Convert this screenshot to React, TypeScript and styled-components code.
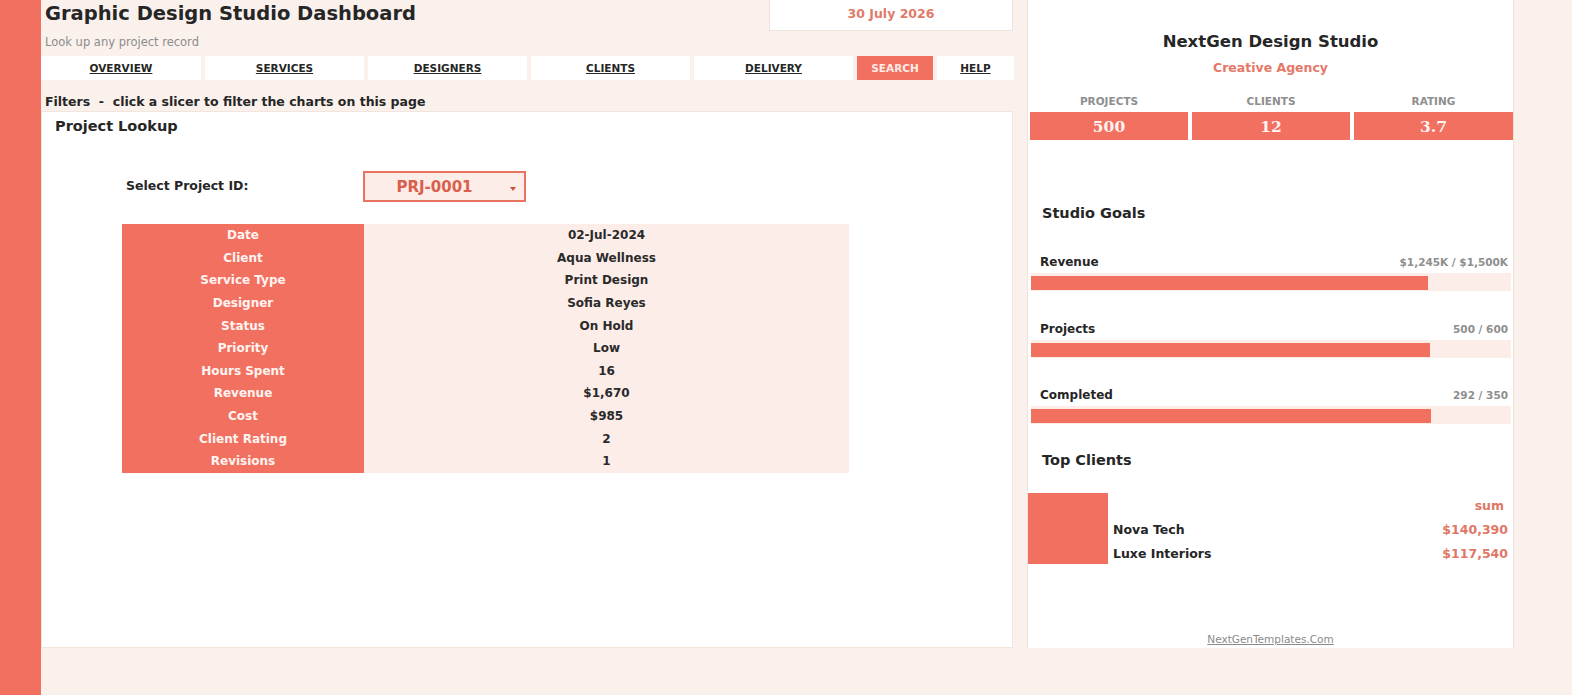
import React from 'react';
import styled, { createGlobalStyle } from 'styled-components';

const coral = '#f27060';
const soft = '#fcede8';
const ink = '#262626';

const GlobalStyle = createGlobalStyle`
  html, body {
    margin: 0;
    padding: 0;
    background: #faf1ed;
    font-family: "DejaVu Sans", Verdana, sans-serif;
    color: ${ink};
  }
  * { box-sizing: border-box; }
`;

const Page = styled.div`
  display: flex;
  height: 695px;
  width: 1572px;
  overflow: hidden;
`;

const Stripe = styled.div`
  width: 41px;
  flex: none;
  background: ${coral};
`;

const MainColumn = styled.div`
  width: 972px;
  flex: none;
  display: flex;
  flex-direction: column;
`;

const Header = styled.div`
  height: 56px;
  display: flex;
  justify-content: space-between;
  align-items: flex-start;
`;

const TitleBlock = styled.div`
  padding: 1px 0 0 4px;
`;

const Title = styled.h1`
  margin: 0;
  font-size: 19.5px;
  line-height: 26px;
  font-weight: bold;
  color: ${ink};
`;

const Subtitle = styled.div`
  margin-top: 8px;
  font-size: 11.5px;
  color: #8c8c8c;
`;

const DateBox = styled.div`
  width: 244px;
  height: 31px;
  background: #fff;
  border: 1px solid #f0e2dc;
  border-top: none;
  display: flex;
  align-items: center;
  justify-content: center;
  padding-bottom: 3px;
  font-size: 12.5px;
  font-weight: bold;
  color: #e07a69;
`;

const Nav = styled.nav`
  display: flex;
  gap: 4px;
  height: 24px;
`;

const NavButton = styled.div<{ $w: number; $active?: boolean }>`
  width: ${p => p.$w}px;
  flex: none;
  display: flex;
  align-items: center;
  justify-content: center;
  background: ${p => (p.$active ? coral : '#fff')};
  color: ${p => (p.$active ? '#fdebe6' : ink)};
  text-decoration: ${p => (p.$active ? 'none' : 'underline')};
  font-size: 10.5px;
  font-weight: bold;
`;

const FilterNote = styled.div`
  height: 31px;
  padding: 14px 0 0 4px;
  font-size: 12.5px;
  font-weight: bold;
  line-height: 16px;
`;

const Panel = styled.section`
  height: 537px;
  background: #fff;
  border: 1px solid #f3e4de;
  padding: 5px 0 0 13px;
`;

const PanelTitle = styled.h2`
  margin: 0;
  font-size: 14.5px;
  line-height: 18px;
  font-weight: bold;
`;

const Lookup = styled.div`
  margin: 36px 0 0 67px;
  width: 728px;
`;

const SelectRow = styled.div`
  display: flex;
  align-items: center;
`;

const SelectLabel = styled.div`
  width: 241px;
  padding: 0 0 2px 4px;
  font-size: 12.5px;
  font-weight: bold;
`;

const Dropdown = styled.div`
  position: relative;
  width: 163px;
  height: 31px;
  border: 2px solid #e8735f;
  background: ${soft};
  display: flex;
  align-items: center;
  justify-content: center;
  padding-right: 20px;
  font-size: 15px;
  font-weight: bold;
  color: #d9604c;
`;

const Caret = styled.span`
  position: absolute;
  right: 8px;
  top: 14px;
  width: 0;
  height: 0;
  border-left: 3.5px solid transparent;
  border-right: 3.5px solid transparent;
  border-top: 4px solid #c9503c;
`;

const Table = styled.div`
  margin-top: 22px;
  display: grid;
  grid-template-columns: 242px 485px;
`;

const LabelCell = styled.div`
  height: 22.6px;
  background: ${coral};
  color: #fff4f1;
  display: flex;
  align-items: center;
  justify-content: center;
  font-size: 12px;
  font-weight: bold;
`;

const ValueCell = styled.div`
  height: 22.6px;
  background: ${soft};
  display: flex;
  align-items: center;
  justify-content: center;
  font-size: 12px;
  font-weight: bold;
  color: #2a2a2a;
`;

const Side = styled.aside`
  margin-left: 14px;
  width: 487px;
  height: 648px;
  flex: none;
  background: #fff;
  border-left: 1px solid #f0e2dc;
  border-right: 1px solid #f0e2dc;
  padding: 31px 1px 0 1px;
  display: flex;
  flex-direction: column;
`;

const Studio = styled.div`
  text-align: center;
  font-size: 16.5px;
  font-weight: bold;
  line-height: 22px;
`;

const Agency = styled.div`
  margin-top: 7px;
  text-align: center;
  font-size: 12.5px;
  line-height: 15px;
  font-weight: bold;
  color: #e57867;
`;

const StatGrid = styled.div`
  margin-top: 20px;
  display: grid;
  grid-template-columns: 158px 158px 159px;
  column-gap: 4px;
  padding-left: 1px;
`;

const StatLabel = styled.div`
  text-align: center;
  font-size: 10.5px;
  line-height: 13px;
  font-weight: bold;
  color: #8e8e8e;
  height: 17px;
`;

const StatValue = styled.div`
  height: 28px;
  background: ${coral};
  color: #fff4f1;
  display: flex;
  align-items: center;
  justify-content: center;
  font-family: "DejaVu Serif", "Liberation Serif", serif;
  font-size: 15.5px;
  font-weight: bold;
`;

const SectionTitle = styled.h3<{ $top: number }>`
  margin: ${p => p.$top}px 0 0 13px;
  font-size: 14.5px;
  line-height: 18px;
  font-weight: bold;
`;

const Goal = styled.div<{ $top: number }>`
  margin-top: ${p => p.$top}px;
`;

const GoalHead = styled.div`
  display: flex;
  justify-content: space-between;
  align-items: center;
  padding: 0 4px 0 11px;
  height: 16px;
`;

const GoalName = styled.span`
  font-size: 12px;
  font-weight: bold;
`;

const GoalValue = styled.span`
  font-size: 10.5px;
  font-weight: bold;
  color: #8e8e8e;
`;

const Track = styled.div`
  margin: 3px 1px 0 2px;
  height: 18px;
  background: ${soft};
  padding-top: 3px;
`;

const Fill = styled.div`
  height: 14px;
  background: ${coral};
`;

const Clients = styled.div`
  margin-top: 24px;
  display: flex;
  margin-left: -1px;
`;

const Swatch = styled.div`
  width: 80px;
  height: 71px;
  background: ${coral};
  flex: none;
`;

const ClientList = styled.div`
  flex: 1;
  padding: 0 4px 0 5px;
`;

const ClientRow = styled.div`
  display: flex;
  justify-content: space-between;
  align-items: center;
  height: 24px;
  font-size: 12.5px;
  font-weight: bold;
`;

const Money = styled.span<{ $pad?: number }>`
  color: #e07766;
  padding-right: ${p => p.$pad ?? 0}px;
`;

const Footer = styled.a`
  margin-top: auto;
  margin-bottom: 3px;
  align-self: center;
  font-size: 10.5px;
  color: #8a8a8a;
  text-decoration: underline;
`;

const navItems = [
  { label: 'OVERVIEW', w: 160 },
  { label: 'SERVICES', w: 159 },
  { label: 'DESIGNERS', w: 159 },
  { label: 'CLIENTS', w: 159 },
  { label: 'DELIVERY', w: 159 },
  { label: 'SEARCH', w: 76, active: true },
  { label: 'HELP', w: 77 },
];

const record: [string, string][] = [
  ['Date', '02-Jul-2024'],
  ['Client', 'Aqua Wellness'],
  ['Service Type', 'Print Design'],
  ['Designer', 'Sofia Reyes'],
  ['Status', 'On Hold'],
  ['Priority', 'Low'],
  ['Hours Spent', '16'],
  ['Revenue', '$1,670'],
  ['Cost', '$985'],
  ['Client Rating', '2'],
  ['Revisions', '1'],
];

const stats = [
  { label: 'PROJECTS', value: '500' },
  { label: 'CLIENTS', value: '12' },
  { label: 'RATING', value: '3.7' },
];

const goals = [
  { name: 'Revenue', value: '$1,245K / $1,500K', pct: 82.8, top: 32 },
  { name: 'Projects', value: '500 / 600', pct: 83.2, top: 30 },
  { name: 'Completed', value: '292 / 350', pct: 83.4, top: 29 },
];

export default function App() {
  return (
    <>
      <GlobalStyle />
      <Page>
        <Stripe />
        <MainColumn>
          <Header>
            <TitleBlock>
              <Title>Graphic Design Studio Dashboard</Title>
              <Subtitle>Look up any project record</Subtitle>
            </TitleBlock>
            <DateBox>30 July 2026</DateBox>
          </Header>
          <Nav>
            {navItems.map(item => (
              <NavButton key={item.label} $w={item.w} $active={item.active}>
                {item.label}
              </NavButton>
            ))}
          </Nav>
          <FilterNote>Filters&nbsp; - &nbsp;click a slicer to filter the charts on this page</FilterNote>
          <Panel>
            <PanelTitle>Project Lookup</PanelTitle>
            <Lookup>
              <SelectRow>
                <SelectLabel>Select Project ID:</SelectLabel>
                <Dropdown>
                  PRJ-0001
                  <Caret />
                </Dropdown>
              </SelectRow>
              <Table>
                {record.map(([label, value]) => (
                  <React.Fragment key={label}>
                    <LabelCell>{label}</LabelCell>
                    <ValueCell>{value}</ValueCell>
                  </React.Fragment>
                ))}
              </Table>
            </Lookup>
          </Panel>
        </MainColumn>
        <Side>
          <Studio>NextGen Design Studio</Studio>
          <Agency>Creative Agency</Agency>
          <StatGrid>
            {stats.map(s => (
              <StatLabel key={s.label}>{s.label}</StatLabel>
            ))}
            {stats.map(s => (
              <StatValue key={s.label}>{s.value}</StatValue>
            ))}
          </StatGrid>
          <SectionTitle $top={64}>Studio Goals</SectionTitle>
          {goals.map(g => (
            <Goal key={g.name} $top={g.top}>
              <GoalHead>
                <GoalName>{g.name}</GoalName>
                <GoalValue>{g.value}</GoalValue>
              </GoalHead>
              <Track>
                <Fill style={{ width: `${g.pct}%` }} />
              </Track>
            </Goal>
          ))}
          <SectionTitle $top={27}>Top Clients</SectionTitle>
          <Clients>
            <Swatch />
            <ClientList>
              <ClientRow>
                <span />
                <Money $pad={4}>sum</Money>
              </ClientRow>
              <ClientRow>
                <span>Nova Tech</span>
                <Money>$140,390</Money>
              </ClientRow>
              <ClientRow>
                <span>Luxe Interiors</span>
                <Money>$117,540</Money>
              </ClientRow>
            </ClientList>
          </Clients>
          <Footer>NextGenTemplates.Com</Footer>
        </Side>
      </Page>
    </>
  );
}
